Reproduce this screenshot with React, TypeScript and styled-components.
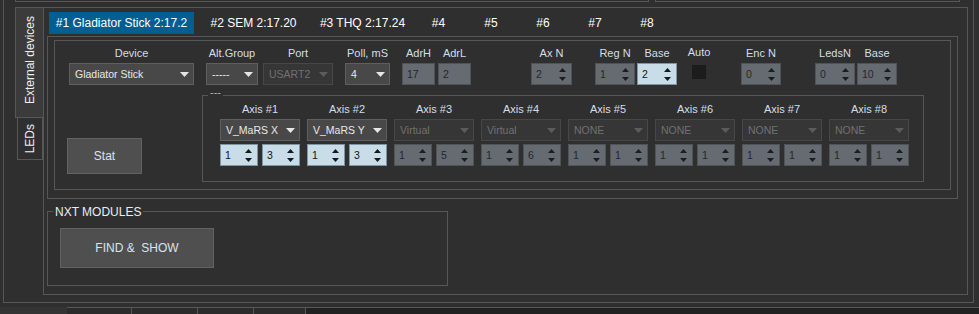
import styled, { createGlobalStyle } from "styled-components";

const GlobalStyle = createGlobalStyle`
  html, body {
    margin: 0;
    padding: 0;
    background: #2f2f2f;
  }
  body {
    font-family: "Liberation Sans", Arial, sans-serif;
    color: #d4e0ea;
  }
`;

const LINE = "#575757";
const BG = "#2f2f2f";

const Screen = styled.div`
  width: 979px;
  height: 314px;
  overflow: hidden;
  background: ${BG};
  display: flex;
  flex-direction: column;
`;

const OuterFrame = styled.div`
  margin-left: 3px;
  width: 971px;
  height: 303px;
  box-sizing: border-box;
  border: 1px solid ${LINE};
  border-top: none;
  display: flex;
  flex-direction: column;
`;

const StubRow = styled.div`
  display: flex;
  gap: 6px;
  margin-left: 11px;
  height: 2px;
`;

const Stub = styled.div<{ $w: number }>`
  width: ${(p) => p.$w}px;
  height: 2px;
  box-sizing: border-box;
  border: 1px solid ${LINE};
  border-top: none;
`;

const Body = styled.div`
  display: flex;
  margin: 5px 0 0 11px;
`;

const SideTabs = styled.div`
  width: 28px;
  display: flex;
  flex-direction: column;
`;

const SideTab = styled.div<{ $active?: boolean }>`
  box-sizing: border-box;
  display: flex;
  align-items: center;
  justify-content: center;
  color: #f0f0f0;
  font-size: 12px;
  ${(p) =>
    p.$active
      ? `
    width: 28px;
    height: 111px;
    background: #3b3b3b;
    border: 1px solid ${LINE};
    border-right: none;
    padding-bottom: 4px;
  `
      : `
    width: 26px;
    height: 42px;
    margin-left: 2px;
    background: ${BG};
    border: 1px solid ${LINE};
    border-top: none;
  `}
`;

const SideText = styled.span`
  writing-mode: vertical-rl;
  transform: rotate(180deg);
  white-space: nowrap;
  line-height: 14px;
`;

const SidePane = styled.div`
  width: 925px;
  height: 288px;
  box-sizing: border-box;
  border: 1px solid ${LINE};
  display: flex;
  flex-direction: column;
`;

const TabBar = styled.div`
  height: 28px;
  box-sizing: border-box;
  padding: 4px 0 0 5px;
  display: flex;
  align-items: flex-start;
`;

const Tab = styled.div<{ $w: number; $active?: boolean }>`
  width: ${(p) => p.$w}px;
  height: 22px;
  line-height: 22px;
  text-align: center;
  font-size: 12px;
  color: #ffffff;
  white-space: nowrap;
  background: ${(p) => (p.$active ? "#005e91" : "transparent")};
`;

const TabPane = styled.div`
  margin-left: 3px;
  width: 911px;
  height: 163px;
  box-sizing: border-box;
  border: 1px solid ${LINE};
`;

const DeviceBox = styled.div`
  margin: 3px 0 0 6px;
  width: 897px;
  height: 150px;
  box-sizing: border-box;
  border: 1px solid ${LINE};
  padding-top: 6px;
`;

const FieldRow = styled.div`
  display: flex;
  align-items: flex-start;
`;

const Field = styled.div<{ $w: number; $ml: number }>`
  width: ${(p) => p.$w}px;
  margin-left: ${(p) => p.$ml}px;
  display: flex;
  flex-direction: column;
  align-items: center;
`;

const Label = styled.div<{ $up?: boolean }>`
  height: 13px;
  line-height: 13px;
  font-size: 11px;
  color: #d2dfea;
  white-space: nowrap;
  margin-bottom: 3px;
  ${(p) => (p.$up ? "transform: translateY(-1px);" : "")}
`;

const ComboBox = styled.div<{ $off?: boolean }>`
  width: 100%;
  height: 22px;
  box-sizing: border-box;
  display: flex;
  align-items: center;
  justify-content: space-between;
  padding: 0 4px 0 5px;
  font-size: 10.5px;
  white-space: nowrap;
  background: ${(p) => (p.$off ? "#363636" : "#484848")};
  border: 1px solid ${(p) => (p.$off ? "#474747" : "#5f5f5f")};
  color: ${(p) => (p.$off ? "#717171" : "#e8e8e8")};
`;

const Spin = styled.div<{ $light?: boolean }>`
  width: 100%;
  height: 22px;
  box-sizing: border-box;
  display: flex;
  align-items: center;
  justify-content: space-between;
  padding: 0 2px 0 4px;
  font-size: 10.5px;
  background: ${(p) => (p.$light ? "#c8dde8" : "#656b71")};
  border: 1px solid ${(p) => (p.$light ? "#7f96a2" : "#4f5458")};
  color: ${(p) => (p.$light ? "#101418" : "#23272b")};
`;

const Arrows = styled.div`
  width: 13px;
  display: flex;
  justify-content: center;
`;

const Check = styled.div`
  width: 14px;
  height: 14px;
  margin-top: 2px;
  background: #1c1c1c;
`;

const LowerRow = styled.div`
  display: flex;
  align-items: flex-start;
  margin-top: 10px;
`;

const PushButton = styled.div<{ $w: number; $h: number; $ml: number; $mt: number }>`
  width: ${(p) => p.$w}px;
  height: ${(p) => p.$h}px;
  margin: ${(p) => p.$mt}px 0 0 ${(p) => p.$ml}px;
  box-sizing: border-box;
  display: flex;
  align-items: center;
  justify-content: center;
  background: #4f4f4f;
  border: 1px solid #626262;
  color: #d8e4ee;
  font-size: 12px;
  white-space: pre;
`;

const AxisGroup = styled.div`
  position: relative;
  margin-left: 60px;
  width: 722px;
  height: 87px;
  box-sizing: border-box;
  border: 1px solid ${LINE};
  padding: 7px 0 0 17px;
  display: flex;
  gap: 7px;
`;

const GroupTitle = styled.span<{ $top: number; $left: number; $size: number; $dim?: boolean }>`
  position: absolute;
  top: ${(p) => p.$top}px;
  left: ${(p) => p.$left}px;
  padding: 0 2px;
  background: ${BG};
  font-size: ${(p) => p.$size}px;
  line-height: ${(p) => p.$size + 2}px;
  color: ${(p) => (p.$dim ? "#a8b4be" : "#e6eef4")};
  white-space: pre;
`;

const AxisCol = styled.div`
  width: 80px;
  display: flex;
  flex-direction: column;
  align-items: center;
`;

const SpinPair = styled.div`
  width: 100%;
  display: grid;
  grid-template-columns: 38px 38px;
  gap: 4px;
  margin-top: 3px;
`;

const NxtBox = styled.div`
  position: relative;
  margin: 12px 0 0 3px;
  width: 401px;
  height: 75px;
  box-sizing: border-box;
  border: 1px solid ${LINE};
`;

const BottomBar = styled.div`
  display: flex;
  margin-top: 4px;
  height: 7px;
`;

const BottomLead = styled.div`
  width: 67px;
  background: #343434;
`;

const BottomTab = styled.div<{ $w: number }>`
  width: ${(p) => p.$w}px;
  box-sizing: border-box;
  border-top: 1px solid ${LINE};
  border-right: 1px solid ${LINE};
  background: #2b2b2b;
`;

const BottomFill = styled.div`
  flex: 1;
  border-top: 1px solid ${LINE};
  background: #212121;
`;

function ComboArrow({ off }: { off?: boolean }) {
  return (
    <svg width="9" height="5" viewBox="0 0 9 5">
      <path d="M0 0h9L4.5 5z" fill={off ? "#5c5c5c" : "#e6e6e6"} />
    </svg>
  );
}

function SpinArrows({ light }: { light?: boolean }) {
  return (
    <Arrows>
      <svg width="7" height="13" viewBox="0 0 7 13">
        <path d="M3.5 0L7 4H0z M0 9h7L3.5 13z" fill={light ? "#15191c" : "#1b1e21"} />
      </svg>
    </Arrows>
  );
}

function Combo({ text, off }: { text: string; off?: boolean }) {
  return (
    <ComboBox $off={off}>
      <span>{text}</span>
      <ComboArrow off={off} />
    </ComboBox>
  );
}

function SpinBox({ value, light, noArrows }: { value: string; light?: boolean; noArrows?: boolean }) {
  return (
    <Spin $light={light}>
      <span>{value}</span>
      {!noArrows && <SpinArrows light={light} />}
    </Spin>
  );
}

const tabs = [
  { t: "#1 Gladiator Stick 2:17.2", w: 145 },
  { t: "#2 SEM 2:17.20", w: 119 },
  { t: "#3 THQ 2:17.24", w: 99 },
  { t: "#4", w: 53 },
  { t: "#5", w: 52 },
  { t: "#6", w: 52 },
  { t: "#7", w: 52 },
  { t: "#8", w: 52 },
];

const axes = [
  { src: "V_MaRS X", a: "1", b: "3", on: true },
  { src: "V_MaRS Y", a: "1", b: "3", on: true },
  { src: "Virtual", a: "1", b: "5" },
  { src: "Virtual", a: "1", b: "6" },
  { src: "NONE", a: "1", b: "1" },
  { src: "NONE", a: "1", b: "1" },
  { src: "NONE", a: "1", b: "1" },
  { src: "NONE", a: "1", b: "1" },
];

export default function App() {
  return (
    <>
      <GlobalStyle />
      <Screen>
        <OuterFrame>
          <StubRow>
            <Stub $w={634} />
            <Stub $w={305} />
          </StubRow>
          <Body>
            <SideTabs>
              <SideTab $active>
                <SideText>External devices</SideText>
              </SideTab>
              <SideTab>
                <SideText>LEDs</SideText>
              </SideTab>
            </SideTabs>
            <SidePane>
              <TabBar>
                {tabs.map((tab, i) => (
                  <Tab key={tab.t} $w={tab.w} $active={i === 0}>
                    {tab.t}
                  </Tab>
                ))}
              </TabBar>
              <TabPane>
                <DeviceBox>
                  <FieldRow>
                    <Field $w={125} $ml={14}>
                      <Label>Device</Label>
                      <Combo text="Gladiator Stick" />
                    </Field>
                    <Field $w={52} $ml={12}>
                      <Label>Alt.Group</Label>
                      <Combo text="-----" />
                    </Field>
                    <Field $w={70} $ml={5}>
                      <Label>Port</Label>
                      <Combo text="USART2" off />
                    </Field>
                    <Field $w={45} $ml={12}>
                      <Label>Poll, mS</Label>
                      <Combo text="4" />
                    </Field>
                    <Field $w={33} $ml={12}>
                      <Label>AdrH</Label>
                      <SpinBox value="17" noArrows />
                    </Field>
                    <Field $w={33} $ml={3}>
                      <Label>AdrL</Label>
                      <SpinBox value="2" noArrows />
                    </Field>
                    <Field $w={41} $ml={60}>
                      <Label>Ax N</Label>
                      <SpinBox value="2" />
                    </Field>
                    <Field $w={40} $ml={23}>
                      <Label>Reg N</Label>
                      <SpinBox value="1" />
                    </Field>
                    <Field $w={40} $ml={2}>
                      <Label>Base</Label>
                      <SpinBox value="2" light />
                    </Field>
                    <Field $w={28} $ml={8}>
                      <Label $up>Auto</Label>
                      <Check />
                    </Field>
                    <Field $w={40} $ml={28}>
                      <Label>Enc N</Label>
                      <SpinBox value="0" />
                    </Field>
                    <Field $w={40} $ml={34}>
                      <Label>LedsN</Label>
                      <SpinBox value="0" />
                    </Field>
                    <Field $w={40} $ml={2}>
                      <Label>Base</Label>
                      <SpinBox value="10" />
                    </Field>
                  </FieldRow>
                  <LowerRow>
                    <PushButton $w={75} $h={36} $ml={12} $mt={43}>
                      Stat
                    </PushButton>
                    <AxisGroup>
                      <GroupTitle $top={-10} $left={5} $size={11} $dim>
                        ---
                      </GroupTitle>
                      {axes.map((ax, i) => (
                        <AxisCol key={i}>
                          <Label>Axis #{i + 1}</Label>
                          <Combo text={ax.src} off={!ax.on} />
                          <SpinPair>
                            <SpinBox value={ax.a} light={ax.on} />
                            <SpinBox value={ax.b} light={ax.on} />
                          </SpinPair>
                        </AxisCol>
                      ))}
                    </AxisGroup>
                  </LowerRow>
                </DeviceBox>
              </TabPane>
              <NxtBox>
                <GroupTitle $top={-7} $left={5} $size={12}>
                  NXT MODULES
                </GroupTitle>
                <PushButton $w={154} $h={40} $ml={12} $mt={16}>
                  {"FIND &  SHOW"}
                </PushButton>
              </NxtBox>
            </SidePane>
          </Body>
        </OuterFrame>
        <BottomBar>
          <BottomLead />
          <BottomTab $w={65} />
          <BottomTab $w={66} />
          <BottomTab $w={56} />
          <BottomTab $w={52} />
          <BottomFill />
        </BottomBar>
      </Screen>
    </>
  );
}
